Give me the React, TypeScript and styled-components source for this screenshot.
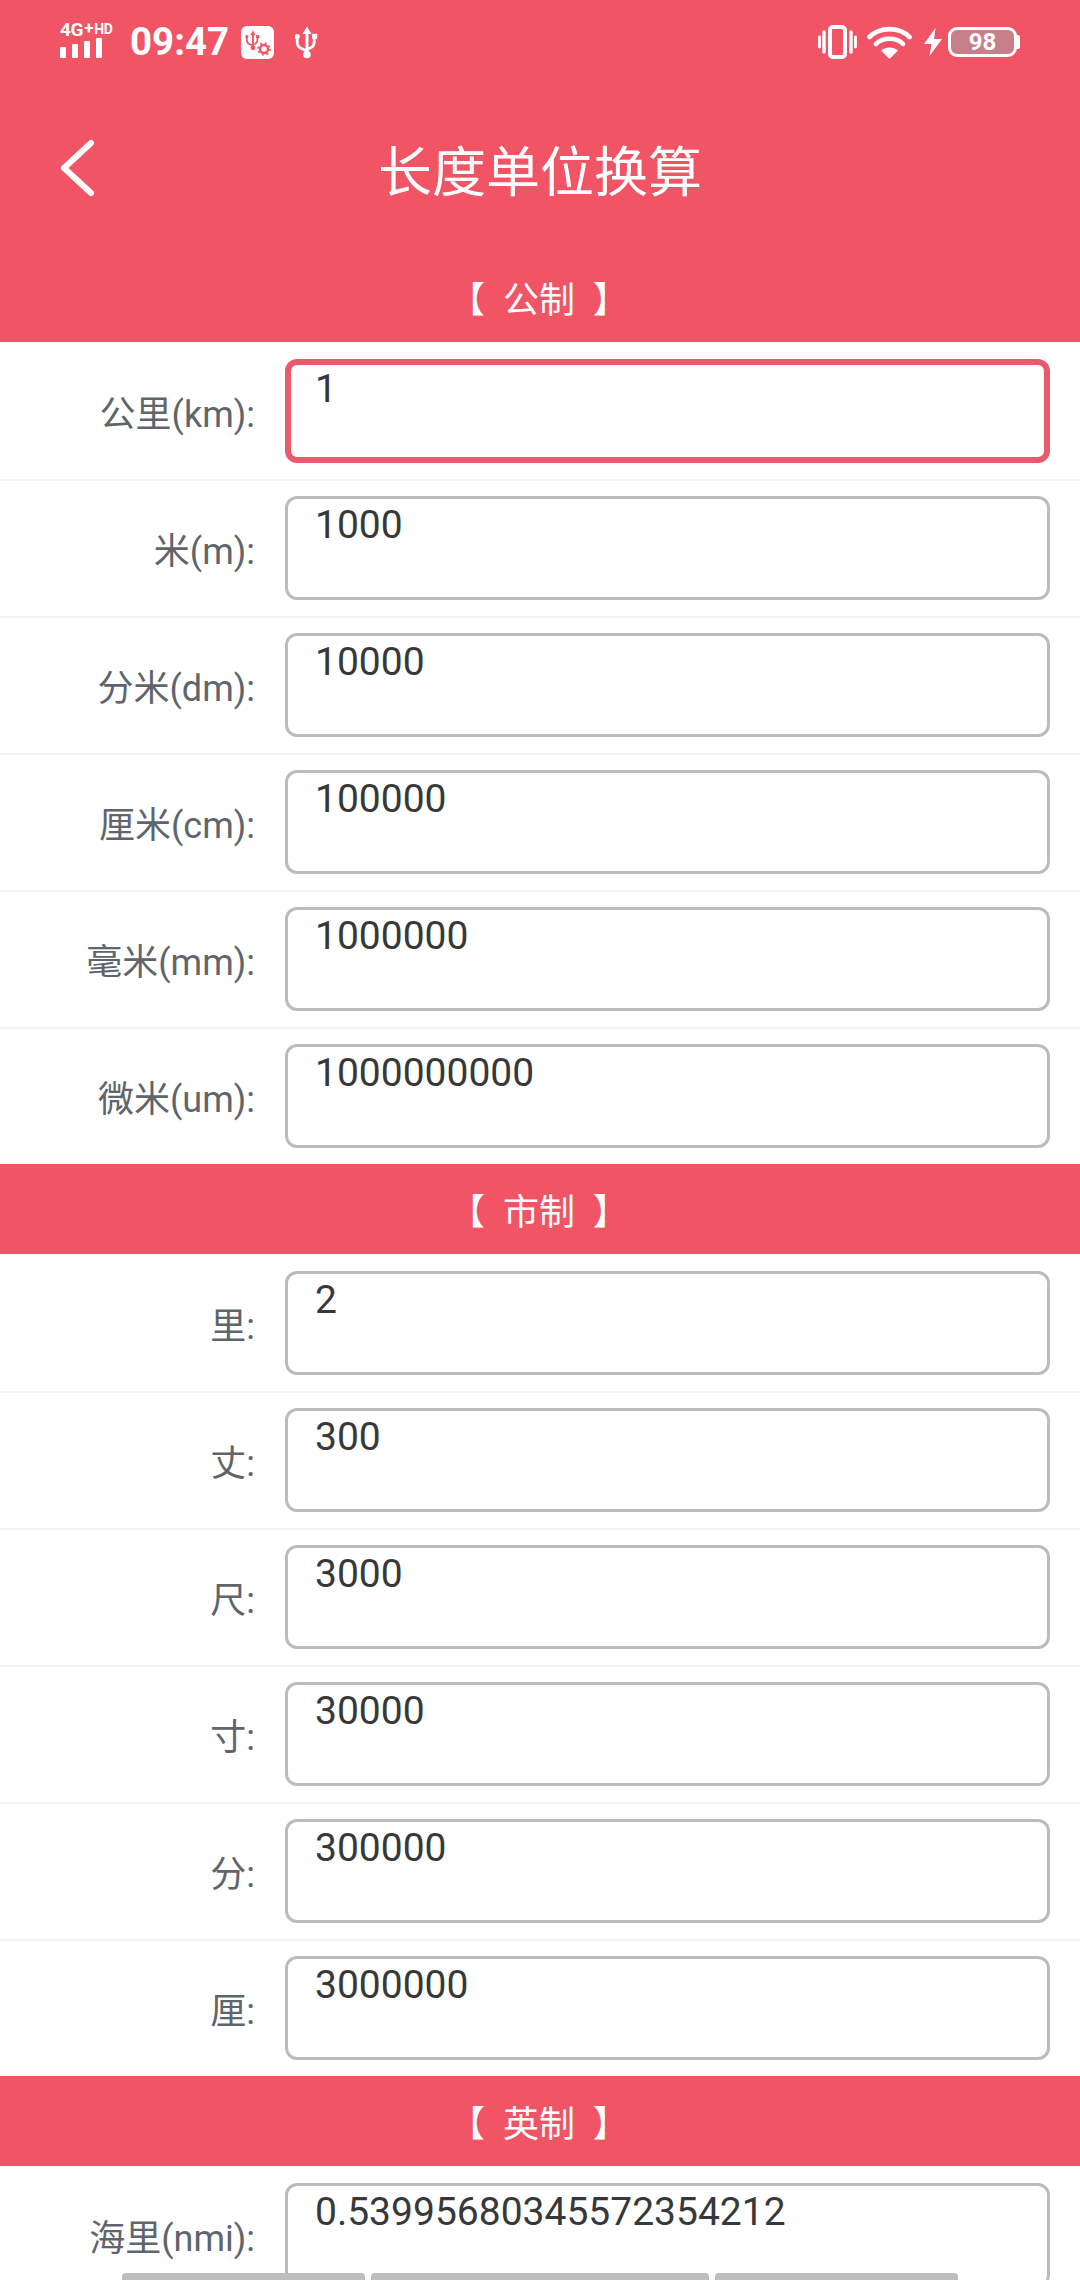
import React from 'react';
import styled, { createGlobalStyle } from 'styled-components';

const RED = '#f15465';

const GlobalStyle = createGlobalStyle`
  html, body {
    margin: 0;
    padding: 0;
    height: 2280px;
    overflow: hidden;
    background: #fff;
  }
  * { box-sizing: border-box; }
  body {
    font-family: Roboto, "Noto Sans CJK SC", sans-serif;
  }
`;

const sections = [
  {
    title: '公制',
    rows: [
      { label: '公里(km):', value: '1', focused: true },
      { label: '米(m):', value: '1000' },
      { label: '分米(dm):', value: '10000' },
      { label: '厘米(cm):', value: '100000' },
      { label: '毫米(mm):', value: '1000000' },
      { label: '微米(um):', value: '1000000000' },
    ],
  },
  {
    title: '市制',
    rows: [
      { label: '里:', value: '2' },
      { label: '丈:', value: '300' },
      { label: '尺:', value: '3000' },
      { label: '寸:', value: '30000' },
      { label: '分:', value: '300000' },
      { label: '厘:', value: '3000000' },
    ],
  },
  {
    title: '英制',
    rows: [{ label: '海里(nmi):', value: '0.53995680345572354212' }],
  },
];

function App() {
  return (
    <Page>
      <GlobalStyle />
      <StatusBar>
        <StatusLeft>
          <Signal>
            <NetworkText>
              <span>4G</span>
              <Plus>+</Plus>
              <Hd>HD</Hd>
            </NetworkText>
            <Bars>
              <Bar $h={11} />
              <Bar $h={14} />
              <Bar $h={17} />
              <Bar $h={20} />
            </Bars>
          </Signal>
          <Clock>09:47</Clock>
          <UsbSettingsIcon />
          <UsbIcon />
        </StatusLeft>
        <StatusRight>
          <VibrateIcon />
          <WifiIcon />
          <BoltIcon />
          <Battery>
            <BatteryBody>98</BatteryBody>
            <BatteryCap />
          </Battery>
        </StatusRight>
      </StatusBar>
      <NavBar>
        <svg width="36" height="58" viewBox="0 0 36 58" fill="none">
          <polyline points="31,4 4,29 31,54" stroke="#fff" strokeWidth="6" strokeLinecap="round" strokeLinejoin="round" />
        </svg>
        <NavTitle>长度单位换算</NavTitle>
      </NavBar>
      {sections.map(section => (
        <section key={section.title}>
          <SectionTitle>【  {section.title}  】</SectionTitle>
          {section.rows.map(row => (
            <Row key={row.label}>
              <Label>{row.label}</Label>
              <ValueBox $focused={row.focused}>{row.value}</ValueBox>
            </Row>
          ))}
        </section>
      ))}
      <KeyStrip>
        <KeyPiece $w={243} />
        <KeyPiece $w={338} />
        <KeyPiece $w={243} />
      </KeyStrip>
    </Page>
  );
}

function UsbGlyph({ color }: { color: string }) {
  return (
    <g fill={color} stroke="none">
      <path d="M12 0 L16.5 7.5 H13.5 V25 H10.5 V7.5 H7.5 Z" />
      <path d="M3.6 10 V15.5 Q3.6 19.5 7 20.8 L11 22.4 V25.4 L5.8 23.3 Q0.8 21.2 0.8 15.5 V10 Z" />
      <circle cx="2.2" cy="10" r="2.6" />
      <path d="M20.6 10 V15.5 Q20.6 20.6 16.4 22.4 L12 24.3 V21.4 L15.4 20 Q17.8 18.9 17.8 15.5 V10 Z" />
      <rect x="17" y="7.2" width="5.2" height="5.2" rx="0.6" />
      <circle cx="12" cy="28" r="3.8" />
    </g>
  );
}

function UsbIcon() {
  return (
    <UsbSvg width="24" height="33" viewBox="0 0 24 32">
      <UsbGlyph color="#fff" />
    </UsbSvg>
  );
}

function UsbSettingsIcon() {
  return (
    <svg width="33" height="33" viewBox="0 0 33 33">
      <rect width="33" height="33" rx="6" fill="#fff" />
      <g transform="translate(4.5 4.5) scale(0.62)">
        <UsbGlyph color={RED} />
      </g>
      <circle cx="23" cy="23" r="4" fill="none" stroke={RED} strokeWidth="2.4" />
      <circle cx="23" cy="23" r="6" fill="none" stroke={RED} strokeWidth="1.6" strokeDasharray="2 2.7" />
    </svg>
  );
}

function VibrateIcon() {
  return (
    <svg width="39" height="34" viewBox="0 0 39 34" fill="none" stroke="#fff" strokeLinecap="round">
      <rect x="12" y="2" width="15" height="30" rx="3" strokeWidth="4" />
      <path d="M6 7 V27 M33 7 V27" strokeWidth="3.4" />
      <path d="M1.5 12 V22 M37.5 12 V22" strokeWidth="2.8" />
    </svg>
  );
}

function WifiIcon() {
  return (
    <svg width="45" height="33" viewBox="0 0 45 33" fill="none" stroke="#fff" strokeLinecap="round">
      <path d="M2.5 11 C13 0.5 32 0.5 42.5 11" strokeWidth="4.6" />
      <path d="M9 18 C15.5 11 29.5 11 36 18" strokeWidth="4.6" />
      <path d="M22.5 33 L14 24.5 C18.5 20.5 26.5 20.5 31 24.5 Z" fill="#fff" stroke="none" />
    </svg>
  );
}

function BoltIcon() {
  return (
    <svg width="18" height="28" viewBox="0 0 18 28">
      <path d="M11.5 0 L0 16 H7.5 L5.5 28 L18 11 H10 Z" fill="#fff" />
    </svg>
  );
}

const Page = styled.div`
  position: relative;
  width: 1080px;
  height: 2280px;
  overflow: hidden;
  background: #fff;
`;

const StatusBar = styled.div`
  height: 84px;
  padding: 0 60px;
  display: flex;
  align-items: center;
  justify-content: space-between;
  background: ${RED};
`;

const StatusLeft = styled.div`
  display: flex;
  align-items: center;
`;

const StatusRight = styled.div`
  display: flex;
  align-items: center;

  svg:nth-child(2) {
    margin: 0 12px 0 10px;
  }
`;

const Signal = styled.div`
  width: 58px;
  margin-right: 12px;
  display: flex;
  flex-direction: column;
  margin-top: -3px;
`;

const NetworkText = styled.div`
  height: 15px;
  display: flex;
  align-items: flex-start;
  color: #fff;
  font-size: 19px;
  font-weight: 700;
  line-height: 14px;
  letter-spacing: -0.3px;
  white-space: nowrap;
`;

const Plus = styled.span`
  font-size: 17px;
  line-height: 10px;
  margin: 0 1px;
`;

const Hd = styled.span`
  font-size: 14px;
  line-height: 12px;
`;

const Bars = styled.div`
  height: 20px;
  display: flex;
  align-items: flex-end;
  gap: 6px;
`;

const Bar = styled.div<{ $h: number }>`
  width: 6px;
  height: ${props => props.$h}px;
  background: #fff;
  border-radius: 1px;
`;

const Clock = styled.div`
  width: 111px;
  color: #fff;
  font-size: 38.5px;
  font-weight: 700;
  line-height: 40px;
`;

const UsbSvg = styled.svg`
  margin-left: 21px;
`;

const Battery = styled.div`
  margin-left: 6px;
  display: flex;
  align-items: center;
`;

const BatteryBody = styled.div`
  width: 69px;
  height: 30px;
  border: 3px solid #fff;
  border-radius: 9px;
  background: #c77f89;
  color: #fff;
  font-size: 24px;
  font-weight: 700;
  line-height: 24px;
  text-align: center;
`;

const BatteryCap = styled.div`
  width: 3px;
  height: 14px;
  background: #fff;
  border-radius: 0 2px 2px 0;
`;

const NavBar = styled.div`
  height: 168px;
  padding-left: 60px;
  display: flex;
  align-items: center;
  background: ${RED};
`;

const NavTitle = styled.div`
  flex: 1;
  margin-left: -36px;
  padding-right: 60px;
  color: #fff;
  font-size: 54px;
  font-weight: 400;
  text-align: center;
`;

const SectionTitle = styled.div`
  height: 90px;
  padding-right: 2px;
  display: flex;
  align-items: center;
  justify-content: center;
  background: ${RED};
  color: #fff;
  font-size: 36px;
  white-space: pre;
`;

const Row = styled.div`
  height: 137px;
  padding: 17px 30px 16px 0;
  display: grid;
  grid-template-columns: 255px 1fr;
  column-gap: 30px;
  align-items: center;

  & + & {
    padding-top: 15px;
    border-top: 2px solid #f3f3f3;
  }
`;

const Label = styled.div`
  color: #60656c;
  font-size: 36px;
  text-align: right;
  white-space: nowrap;
`;

const ValueBox = styled.div<{ $focused?: boolean }>`
  height: 104px;
  padding: ${props => (props.$focused ? '0 24px' : '2px 27px 0')};
  border: ${props => (props.$focused ? '6px' : '3px')} solid
    ${props => (props.$focused ? '#e85a6c' : '#bcbcbc')};
  border-radius: 12px;
  color: #37383a;
  font-size: 39px;
  line-height: 48px;
`;

const KeyStrip = styled.div`
  position: absolute;
  left: 122px;
  bottom: 0;
  height: 7px;
  display: flex;
  gap: 6px;
`;

const KeyPiece = styled.div<{ $w: number }>`
  width: ${props => props.$w}px;
  background: #bdbdbd;
  border-radius: 4px 4px 0 0;
`;

export default App;
